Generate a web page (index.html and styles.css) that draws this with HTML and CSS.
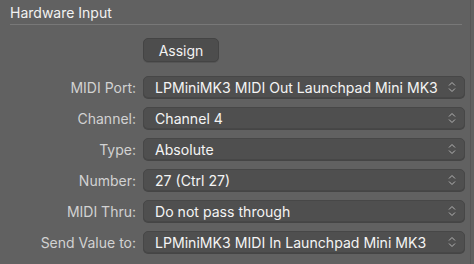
FILE: index.html
```html
<!DOCTYPE html>
<html lang="en">
<head>
  <meta charset="UTF-8" />
  <title>Hardware Input</title>
  <link rel="stylesheet" href="styles.css">
</head>
<body>
  <section class="inspector">
    <h2 class="section-title">Hardware Input</h2>
    <div class="form-grid">
      <span></span>
      <div class="assign-cell"><button class="assign-btn">Assign</button></div>

      <label>MIDI Port:</label>
      <div class="popup"><span>LPMiniMK3 MIDI Out Launchpad Mini MK3</span><svg viewBox="0 0 8 14"><path d="M1 5.5L4 2.5L7 5.5M1 8.5L4 11.5L7 8.5"/></svg></div>

      <label>Channel:</label>
      <div class="popup"><span>Channel 4</span><svg viewBox="0 0 8 14"><path d="M1 5.5L4 2.5L7 5.5M1 8.5L4 11.5L7 8.5"/></svg></div>

      <label>Type:</label>
      <div class="popup"><span>Absolute</span><svg viewBox="0 0 8 14"><path d="M1 5.5L4 2.5L7 5.5M1 8.5L4 11.5L7 8.5"/></svg></div>

      <label>Number:</label>
      <div class="popup"><span>27 (Ctrl 27)</span><svg viewBox="0 0 8 14"><path d="M1 5.5L4 2.5L7 5.5M1 8.5L4 11.5L7 8.5"/></svg></div>

      <label>MIDI Thru:</label>
      <div class="popup"><span>Do not pass through</span><svg viewBox="0 0 8 14"><path d="M1 5.5L4 2.5L7 5.5M1 8.5L4 11.5L7 8.5"/></svg></div>

      <label>Send Value to:</label>
      <div class="popup"><span>LPMiniMK3 MIDI In Launchpad Mini MK3</span><svg viewBox="0 0 8 14"><path d="M1 5.5L4 2.5L7 5.5M1 8.5L4 11.5L7 8.5"/></svg></div>
    </div>
  </section>
</body>
</html>
```

FILE: styles.css
```css
/* Inspector panel */
body { margin: 0; background-color: #616161; font-family: 'Inter', 'Liberation Sans', sans-serif; }
.inspector { width: 471px; height: 264px; border-right: 1px solid #575757; box-sizing: border-box; padding: 0 0 0 10px; }

.section-title {
  margin: 0; height: 25px; box-sizing: border-box; padding-top: 4px;
  font-size: 14px; font-weight: 400; color: #f2f2f2;
  border-bottom: 1px solid #787878; margin-right: 8px;
}

/* Form rows */
.form-grid {
  display: grid; grid-template-columns: 126px 322px; column-gap: 7px;
  grid-template-rows: 30px repeat(6, 22px); row-gap: 9px; margin-top: 12px; align-items: center;
}
.form-grid label { text-align: right; font-size: 14px; color: #d2d2d2; }
.assign-cell { align-self: start; padding-top: 1px; }

.assign-btn {
  width: 76px; height: 24px; display: block;
  background-color: #4d4d4d; border: 1px solid #444; border-radius: 5px;
  color: #f2f2f2; font-family: inherit; font-size: 14px; padding: 0;
  box-shadow: 0 1px 0 #555;
}

.popup {
  height: 22px; box-sizing: border-box; display: flex; align-items: center;
  justify-content: space-between; padding: 0 8px 0 11px;
  background-color: #4f4f4f; border: 1px solid #474747; border-radius: 5px;
  box-shadow: 0 1px 0 #454545; color: #f4f4f4; font-size: 14.1px;
}
.popup span { white-space: nowrap; }
.popup svg { width: 8px; height: 14px; flex-shrink: 0; fill: none; stroke: #b4b4b4; stroke-width: 1; }
```
